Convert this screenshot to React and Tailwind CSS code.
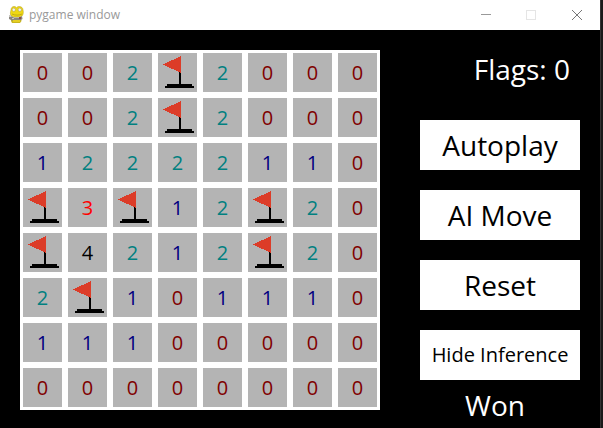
import { Fragment } from "react";

const BOARD = [
  "002F2000",
  "002F2000",
  "12222110",
  "F3F12F20",
  "F4212F20",
  "2F101110",
  "11100000",
  "00000000",
];

const COLORS = {
  0: "text-[#800000]",
  1: "text-[#000080]",
  2: "text-[#008080]",
  3: "text-[#ff0000]",
  4: "text-[#000000]",
};

function Flag() {
  return (
    <svg viewBox="0 0 39 39" className="h-full w-full" shapeRendering="crispEdges" role="img" aria-label="Flag">
      <path d="M21 19h2v12h-2zM9 31h25v2H9zM7 33h29v2H7z" fill="#000" />
      <path d="M5 11.5L23 3v17z" fill="#dc3c28" />
    </svg>
  );
}

function Snake() {
  return (
    <svg viewBox="0 0 16 18" className="h-[18px] w-4" aria-hidden="true">
      <path d="M3 12h10l.5 3-1.500 2H4l-1-2z" fill="#c9b61e" />
      <path d="M3 4c0-2 1.200-3.500 3-3.500 1.200 0 2 .5 2.500 1.200C9.200 1 10 .5 11.200.5 13.500.5 15 2 15 4c.6 2 .3 4.500-.8 5.800C12 11.500 5 11.500 3 9.800 2 8 2.400 6 3 4z" fill="#efd814" stroke="#b39d18" strokeWidth=".5" />
      <circle cx="5.800" cy="3.800" r="1.700" fill="#f3f3ea" stroke="#a89740" strokeWidth=".5" />
      <circle cx="11.800" cy="3.800" r="1.700" fill="#f3f3ea" stroke="#a89740" strokeWidth=".5" />
      <path d="M4 8c3 1.500 7 1.500 10 0" fill="none" stroke="#a38e14" strokeWidth=".6" />
      <path d="M1 10l3 .5 2 1h5l3-1.500.5 3-2.500 1.500H4L1 13z" fill="#8a867e" />
      <path d="M1 9h2v2H1zM4 12h2v1H4z" fill="#c9c7c2" />
      <path d="M11 11h2v2h-2z" fill="#8e4b45" />
      <path d="M5 14h7v2H5z" fill="#e6cf22" />
    </svg>
  );
}

function TitleBar() {
  return (
    <header className="flex h-[30px] items-center bg-white pl-2">
      <Snake />
      <h1 className="flex-1 pl-[5px] font-['Open_Sans','Noto_Sans',sans-serif] text-xs text-[#999999]">pygame window</h1>
      <button aria-label="Minimize" className="flex h-full w-[45px] items-center justify-center">
        <svg viewBox="0 0 10 10" className="size-2.5" stroke="#999" shapeRendering="crispEdges"><path d="M0 4.500h10" /></svg>
      </button>
      <button aria-label="Maximize" disabled className="flex h-full w-[45px] items-center justify-center">
        <svg viewBox="0 0 10 10" className="size-2.5" stroke="#e5e5e5" fill="none" shapeRendering="crispEdges"><path d="M.5.5h9v9h-9z" /></svg>
      </button>
      <button aria-label="Close" className="flex h-full w-[47px] items-center justify-center">
        <svg viewBox="0 0 10 10" className="size-2.5" stroke="#777"><path d="M0 0l10 10M10 0L0 10" /></svg>
      </button>
    </header>
  );
}

function Action({ children, small }) {
  return (
    <button className={"h-[50px] w-full bg-white text-black " + (small ? "text-[20px]" : "text-[28px]")}>
      {children}
    </button>
  );
}

export default function App() {
  return (
    <div className="min-h-screen border-r-2 border-[#1a1a1a] bg-black font-['Open_Sans','Noto_Sans',sans-serif]">
      <div className="min-h-screen border-r border-[#333333]">
        <TitleBar />
        <main className="grid grid-cols-[9fr_4fr] items-start gap-10 px-5 pt-5">
          <section aria-label="Minefield" className="grid grid-cols-8 gap-1.5 bg-white p-[3px]">
            {BOARD.map((row, y) => (
              <Fragment key={y}>
                {[...row].map((cell, x) => (
                  <button
                    key={x}
                    className={"flex aspect-square items-center justify-center bg-[#b4b4b4] text-[20px] leading-none " + (COLORS[cell] || "")}
                  >
                    {cell === "F" ? <Flag /> : cell}
                  </button>
                ))}
              </Fragment>
            ))}
          </section>
          <aside className="flex flex-col whitespace-nowrap text-white">
            <p className="pr-2.5 text-right text-[28px] leading-[38px]">Flags: 0</p>
            <div className="mt-8 flex flex-col gap-5">
              <Action>Autoplay</Action>
              <Action>AI Move</Action>
              <Action>Reset</Action>
              <Action small>Hide Inference</Action>
            </div>
            <p className="mt-1.5 pr-2.5 text-center text-[28px] leading-[38px]">Won</p>
          </aside>
        </main>
      </div>
    </div>
  );
}
